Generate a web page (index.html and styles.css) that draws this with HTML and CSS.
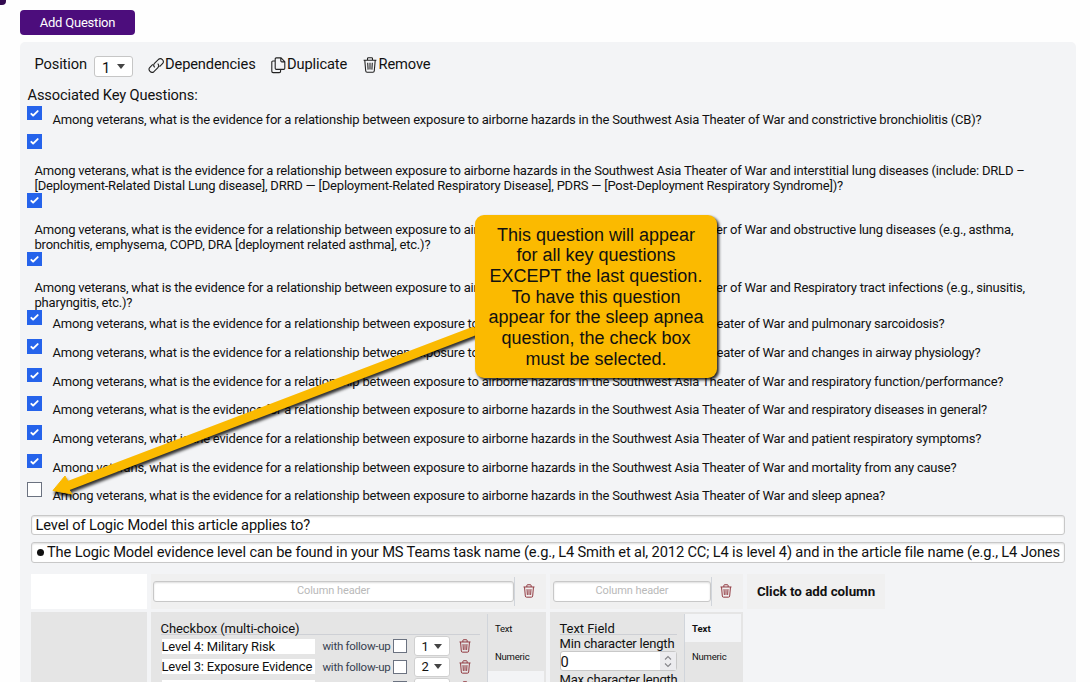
FILE: index.html
```html
<!DOCTYPE html>
<html lang="en">
<head>
<meta charset="utf-8">
<title>Question editor</title>
<link rel="stylesheet" href="styles.css">
</head>
<body>
<svg class="defs" width="0" height="0" aria-hidden="true">
  <symbol id="trash" viewBox="0 0 14 16"><path d="M.6 3.300h12.800M4.500 3.200V1.600q0-.9.9-.9h3.200q.9 0 .9.9v1.600M1.800 3.500l.9 10.300q.1 1.400 1.400 1.400h5.800q1.300 0 1.400-1.400l.9-10.300M4.700 5.800l.4 6.800M7 5.800v6.800M9.300 5.800l-.4 6.800"/></symbol>
  <symbol id="tick" viewBox="0 0 16 16"><path d="M12.207 4.793a1 1 0 010 1.414l-5 5a1 1 0 01-1.414 0l-2-2a1 1 0 011.414-1.414L6.5 9.086l4.293-4.293a1 1 0 011.414 0z"/></symbol>
</svg>
<div class="corner"></div>
<main class="page">
  <button class="add">Add Question</button>
  <section class="panel">
    <div class="toolbar">
      <span class="position">Position</span>
      <span class="select">1<i class="caret"></i></span>
      <span class="action dependencies"><svg width="17" height="17" viewBox="0 0 17 17"><path d="M6.700 10.300A3 3 0 0 1 6.700 6.100L10.500 2.300A3 3 0 0 1 14.700 6.500L11.600 9.600M9.700 6.700A3 3 0 0 1 9.700 10.900L5.900 14.700A3 3 0 0 1 1.700 10.500L4.800 7.400"/></svg>Dependencies</span>
      <span class="action duplicate"><svg width="15" height="17" viewBox="0 0 15 17"><path d="M5.300.9H10l3.800 3.800v6.600q0 1.100-1.100 1.100H5.300q-1.100 0-1.100-1.100V2Q4.200.9 5.300.9zM9.800 1v2.800q0 1.100 1.100 1.100h2.800M4.200 4H1.900Q.8 4 .8 5.100v9.200q0 1.300 1.300 1.300h6.200q1.300 0 1.300-1.300v-1.800"/></svg>Duplicate</span>
      <span class="action remove"><svg width="14" height="16"><use href="#trash"/></svg>Remove</span>
    </div>
    <h2 class="heading">Associated Key Questions:</h2>
    <ul class="questions">
      <li class="question"><span class="check on"><svg><use href="#tick"/></svg></span><p>Among veterans, what is the evidence for a relationship between exposure to airborne hazards in the Southwest Asia Theater of War and constrictive bronchiolitis (CB)?</p></li>
      <li class="question long"><span class="check on"><svg><use href="#tick"/></svg></span><p>Among veterans, what is the evidence for a relationship between exposure to airborne hazards in the Southwest Asia Theater of War and interstitial lung diseases (include: DRLD –<br>[Deployment-Related Distal Lung disease], DRRD — [Deployment-Related Respiratory Disease], PDRS — [Post-Deployment Respiratory Syndrome])?</p></li>
      <li class="question long"><span class="check on"><svg><use href="#tick"/></svg></span><p>Among veterans, what is the evidence for a relationship between exposure to airborne hazards in the Southwest Asia Theater of War and obstructive lung diseases (e.g., asthma,<br>bronchitis, emphysema, COPD, DRA [deployment related asthma], etc.)?</p></li>
      <li class="question long"><span class="check on"><svg><use href="#tick"/></svg></span><p>Among veterans, what is the evidence for a relationship between exposure to airborne hazards in the Southwest Asia Theater of War and Respiratory tract infections (e.g., sinusitis,<br>pharyngitis, etc.)?</p></li>
      <li class="question"><span class="check on"><svg><use href="#tick"/></svg></span><p>Among veterans, what is the evidence for a relationship between exposure to airborne hazards in the Southwest Asia Theater of War and pulmonary sarcoidosis?</p></li>
      <li class="question"><span class="check on"><svg><use href="#tick"/></svg></span><p>Among veterans, what is the evidence for a relationship between exposure to airborne hazards in the Southwest Asia Theater of War and changes in airway physiology?</p></li>
      <li class="question"><span class="check on"><svg><use href="#tick"/></svg></span><p>Among veterans, what is the evidence for a relationship between exposure to airborne hazards in the Southwest Asia Theater of War and respiratory function/performance?</p></li>
      <li class="question"><span class="check on"><svg><use href="#tick"/></svg></span><p>Among veterans, what is the evidence for a relationship between exposure to airborne hazards in the Southwest Asia Theater of War and respiratory diseases in general?</p></li>
      <li class="question"><span class="check on"><svg><use href="#tick"/></svg></span><p>Among veterans, what is the evidence for a relationship between exposure to airborne hazards in the Southwest Asia Theater of War and patient respiratory symptoms?</p></li>
      <li class="question"><span class="check on"><svg><use href="#tick"/></svg></span><p>Among veterans, what is the evidence for a relationship between exposure to airborne hazards in the Southwest Asia Theater of War and mortality from any cause?</p></li>
      <li class="question"><span class="check"></span><p>Among veterans, what is the evidence for a relationship between exposure to airborne hazards in the Southwest Asia Theater of War and sleep apnea?</p></li>
    </ul>
    <div class="field title">Level of Logic Model this article applies to?</div>
    <div class="field note"><span class="bullet"></span>The Logic Model evidence level can be found in your MS Teams task name (e.g., L4 Smith et al, 2012 CC; L4 is level 4) and in the article file name (e.g., L4 Jones</div>
    <div class="grid">
      <div class="blank"></div>
      <div class="head"><div class="header-box">Column header</div><div class="delete"><svg width="12" height="14"><use href="#trash"/></svg></div></div>
      <div class="head"><div class="header-box">Column header</div><div class="delete"><svg width="12" height="14"><use href="#trash"/></svg></div></div>
      <div class="head add-column">Click to add column</div>
      <div class="cell"></div>
      <div class="cell editor">
        <div class="options">
          <div class="kind">Checkbox (multi-choice)</div>
          <div class="option"><span class="label">Level 4: Military Risk</span><span class="follow">with follow-up</span><span class="check"></span><span class="select small">1<i class="caret"></i></span><svg class="bin" width="12" height="14"><use href="#trash"/></svg></div>
          <div class="option"><span class="label">Level 3: Exposure Evidence</span><span class="follow">with follow-up</span><span class="check"></span><span class="select small">2<i class="caret"></i></span><svg class="bin" width="12" height="14"><use href="#trash"/></svg></div>
          <div class="option"><span class="label"></span><span class="follow"></span><span class="check"></span><span class="select small"></span><svg class="bin" width="12" height="14"><use href="#trash"/></svg></div>
        </div>
        <div class="tabs"><span class="tab">Text</span><span class="tab">Numeric</span><span class="tab active"></span></div>
      </div>
      <div class="cell editor">
        <div class="textfield">
          <div class="kind">Text Field</div>
          <div class="limit">Min character length</div>
          <div class="number">0<span class="spin"><svg width="10" height="13" viewBox="0 0 10 13"><path d="M2 4.500 5 1.500l3 3M2 8.500l3 3 3-3"/></svg></span></div>
          <div class="limit">Max character length</div>
        </div>
        <div class="tabs"><span class="tab active">Text</span><span class="tab">Numeric</span></div>
      </div>
    </div>
  </section>
</main>
<svg class="arrow" width="1090" height="682" viewBox="0 0 1090 682"><path d="M473 331.500 66 486.500" class="shaft"/><path class="tip" d="M53 490.500 65 476 69 484 68.500 489 72 494z"/></svg>
<aside class="callout">This question will appear<br>for all key questions<br>EXCEPT the last question.<br>To have this question<br>appear for the sleep apnea<br>question, the check box<br>must be selected.</aside>
</body>
</html>
```
FILE: styles.css
```css
* { box-sizing: border-box; }
body { margin: 0; height: 682px; overflow: hidden; background: #fefefe; color: #111; font-family: Roboto, sans-serif; position: relative; }
.defs, .corner, .arrow, .callout { position: absolute; }
.corner { left: 0; top: 0; width: 6px; height: 5px; background: #330b50; border-bottom-right-radius: 4px; }
.page { padding: 10px 14px 0 20px; }
.add { display: block; width: 115px; height: 25px; padding: 0; border: 0; border-radius: 4px; background: #4c0d7c; color: #fff; font: 13px/25px Roboto, sans-serif; letter-spacing: -.21px; }
.panel { margin-top: 7px; height: 640px; overflow: hidden; border-radius: 5px 5px 0 0; background: #f3f4f6; padding: 13px 11px 0 7px; }
.toolbar { display: flex; align-items: flex-start; height: 32px; padding-left: 7.500px; font-size: 14.67px; line-height: 18px; letter-spacing: -.13px; }
.position { width: 59.500px; }
.select { display: flex; align-items: center; justify-content: space-between; width: 39px; height: 21px; margin-top: 1px; padding: 3px 7px 0 7px; border: 1px solid #c6c6c6; border-radius: 3px; background: #fff; }
.caret { margin-top: -3px; border: 4px solid transparent; border-top: 5px solid #444; border-bottom: 0; }
.action { display: flex; white-space: nowrap; }
.action svg { margin-top: 2px; }
.dependencies { margin-left: 15px; width: 122.500px; }
.duplicate { width: 92px; gap: 1.500px; }
.remove { gap: 2px; }
svg { fill: none; stroke: #222; stroke-width: 1.1; }
.heading { margin: 0; height: 18.670px; padding-left: .5px; font-size: 14.67px; line-height: 17px; font-weight: 400; letter-spacing: -.13px; }
.questions { margin: 0; padding: 0; list-style: none; font-size: 13px; line-height: 15px; letter-spacing: -.21px; white-space: nowrap; }
.question { display: flex; height: 28.67px; gap: 10.500px; }
.question p { margin: 6px 0 0; }
.question.long { display: block; height: 58.67px; }
.question.long p { margin: 14px 0 0 7.500px; }
.check { display: block; flex: none; width: 15px; height: 14.67px; border: 1px solid #6b7280; background: #fff; }
.check.on { border: 0; background: #2563eb; }
.check svg { display: block; width: 15px; height: 14.67px; fill: #fff; stroke: none; }
.field { display: flex; align-items: center; height: 20px; margin: 0 0 7px 4px; padding: 0 4px; border: 1px solid #c8c8c8; border-radius: 3px; background: #fff; box-shadow: inset 0 1px 2px #ddd; font-size: 14.67px; letter-spacing: -.14px; white-space: nowrap; overflow: hidden; }
.title { margin-top: 4px; padding-left: 3.500px; }
.note { height: 21px; }
.bullet { width: 7px; height: 7px; margin: 1px 3.500px 0 .5px; border-radius: 50%; background: #111; flex: none; }
.grid { display: grid; grid-template-columns: 116px 395px 193px 138px; grid-template-rows: 35px 90px; gap: 3px 4px; margin: 11px 0 0 4px; }
.blank { background: #fff; }
.head { display: flex; align-items: center; background: #f0f0f0; padding-left: 2px; }
.head + .head { padding-left: 3px; }
.header-box { flex: 1; height: 21px; border: 1px solid #c8c8c8; border-radius: 3px; background: #fff; box-shadow: inset 0 1px 2px #ddd; color: #b9b9b9; text-align: center; font-size: 11px; line-height: 18px; letter-spacing: -.1px; }
.delete { display: flex; align-items: center; justify-content: center; width: 32px; height: 29px; margin: 0 0 0 0; border-left: 1px solid #d1d5db; padding-right: 3px; }
.delete svg, .bin { stroke: #8b2e35; }
.head.add-column { justify-content: center; padding: 0; font-size: 13.330px; font-weight: 700; }
.cell { background: #e5e5e5; }
.editor { display: flex; justify-content: space-between; padding: 2px 2px 0 9.500px; }
.options { width: 319px; padding-top: 7px; }
.kind { height: 14px; border-bottom: 1px solid #ced0d5; font-size: 13px; line-height: 15px; letter-spacing: -.05px; }
.kind + .option { margin-top: 1px; }
.option { display: flex; align-items: center; height: 20.67px; }
.label { width: 153px; height: 15px; margin-left: 1px; background: #fff; font-size: 13px; line-height: 15px; letter-spacing: -.19px; white-space: nowrap; overflow: hidden; }
.follow { width: 69px; margin: 0 1px 0 8px; color: #374151; font-size: 11.500px; letter-spacing: -.27px; white-space: nowrap; }
.small { width: 36px; height: 20px; margin: 0 0 0 7px; padding: 0 7px; border-color: #d0d0d0; font-size: 13px; }
.small .caret { margin-top: 0; }
.option .check { width: 14px; height: 14px; }
.bin { margin-left: 9px; }
.tabs { width: 57px; border-left: 1px solid #d1d5db; font-size: 9.500px; letter-spacing: -.2px; }
.tab { display: block; height: 28.500px; padding-left: 7px; line-height: 29px; }
.active { background: #f3f4f6; font-weight: 700; letter-spacing: 0; }
.textfield { width: 117px; padding-top: 7px; }
.limit { height: 16.500px; font-size: 13px; line-height: 17px; letter-spacing: -.19px; white-space: nowrap; }
.number { display: flex; justify-content: space-between; height: 20px; border: 1px solid #c8c8c8; border-radius: 3px; background: #fff; font-size: 14.67px; line-height: 20px; }
.spin { display: flex; align-items: center; justify-content: center; width: 16px; background: #ececef; }
.spin svg { stroke: #85858a; }
.arrow { left: 0; top: 0; filter: drop-shadow(1px 3px 1.500px rgba(0,0,0,.8)); }
.shaft { stroke: #fbba00; stroke-width: 9; stroke-linecap: round; }
.tip { fill: #fbba00; stroke: #fbba00; stroke-width: 1; }
.callout { left: 475px; top: 215px; width: 242px; height: 163px; padding-top: 9.500px; border-radius: 9px; background: #fbba00; box-shadow: 2px 2px 3px rgba(0,0,0,.85); text-align: center; font: 18px/20.670px "Liberation Sans", sans-serif; }
```
